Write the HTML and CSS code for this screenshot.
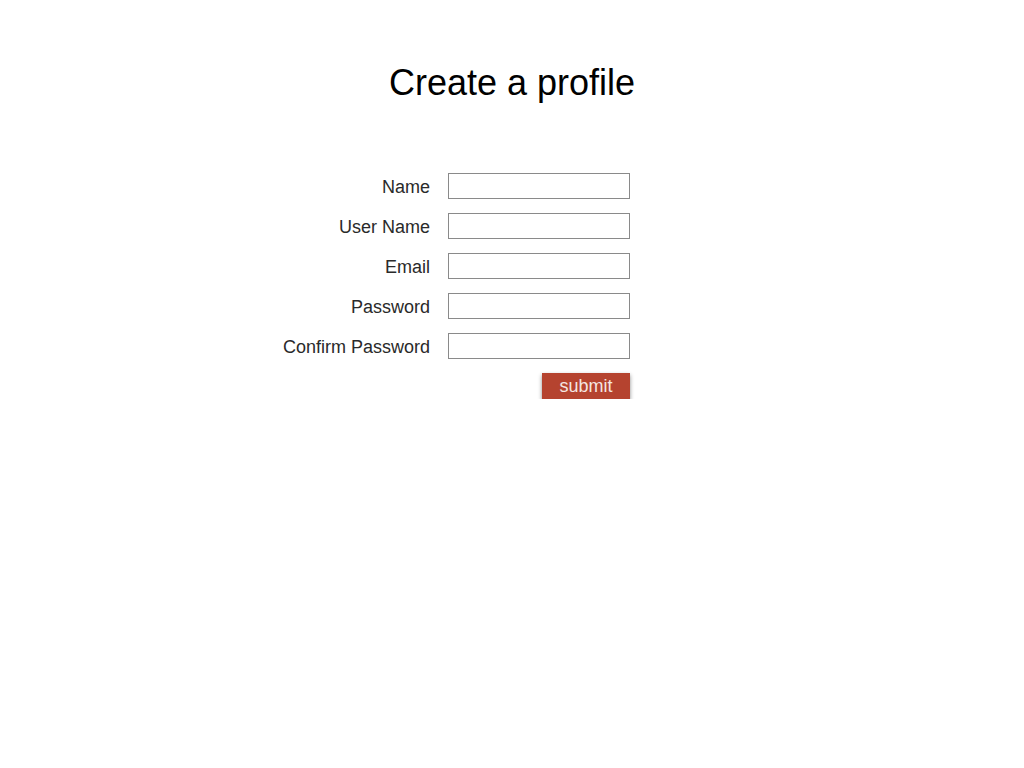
FILE: index.html
```html
<!DOCTYPE html>
<html>
<head>
<meta charset="utf-8">
<link rel="stylesheet" href="styles.css">
</head>
<body>
<h1 class="title">Create a profile</h1>
<form class="form">
  <label class="label">Name</label><input class="field" type="text">
  <label class="label">User Name</label><input class="field" type="text">
  <label class="label">Email</label><input class="field" type="text">
  <label class="label">Password</label><input class="field" type="password">
  <label class="label">Confirm Password</label><input class="field" type="password">
  <span></span><div class="actions"><button class="submit" type="button">submit</button></div>
</form>
</body>
</html>
```
FILE: styles.css
```css
html, body {
  margin: 0;
  padding: 0;
  background: #ffffff;
}
body {
  font-family: "Liberation Sans", Arial, sans-serif;
  color: #1a1a1a;
}
.title {
  margin: 63px 0 0 0;
  font-size: 36px;
  line-height: 40px;
  font-weight: normal;
  text-align: center;
  color: #000;
}
.form {
  display: grid;
  grid-template-columns: 430px 182px;
  column-gap: 18px;
  row-gap: 14px;
  grid-auto-rows: 26px;
  margin-top: 70px;
}
.label {
  font-size: 18px;
  line-height: 23px;
  padding-top: 3px;
  text-align: right;
  color: #2a2a2a;
}
.field {
  box-sizing: border-box;
  width: 182px;
  height: 26px;
  margin: 0;
  border: 1px solid #8a8a8a;
  background: #fff;
  padding: 0 4px;
  font: 16px "Liberation Sans", Arial, sans-serif;
  outline: none;
}
.actions {
  display: flex;
  justify-content: flex-end;
}
.submit {
  width: 88px;
  height: 26px;
  margin: 0;
  border: none;
  padding: 0;
  background: #b5432f;
  color: #f4e6e2;
  font: 18px/26px "Liberation Sans", Arial, sans-serif;
  box-shadow: 0 2px 4px rgba(0, 0, 0, 0.45);
  cursor: pointer;
}
```
